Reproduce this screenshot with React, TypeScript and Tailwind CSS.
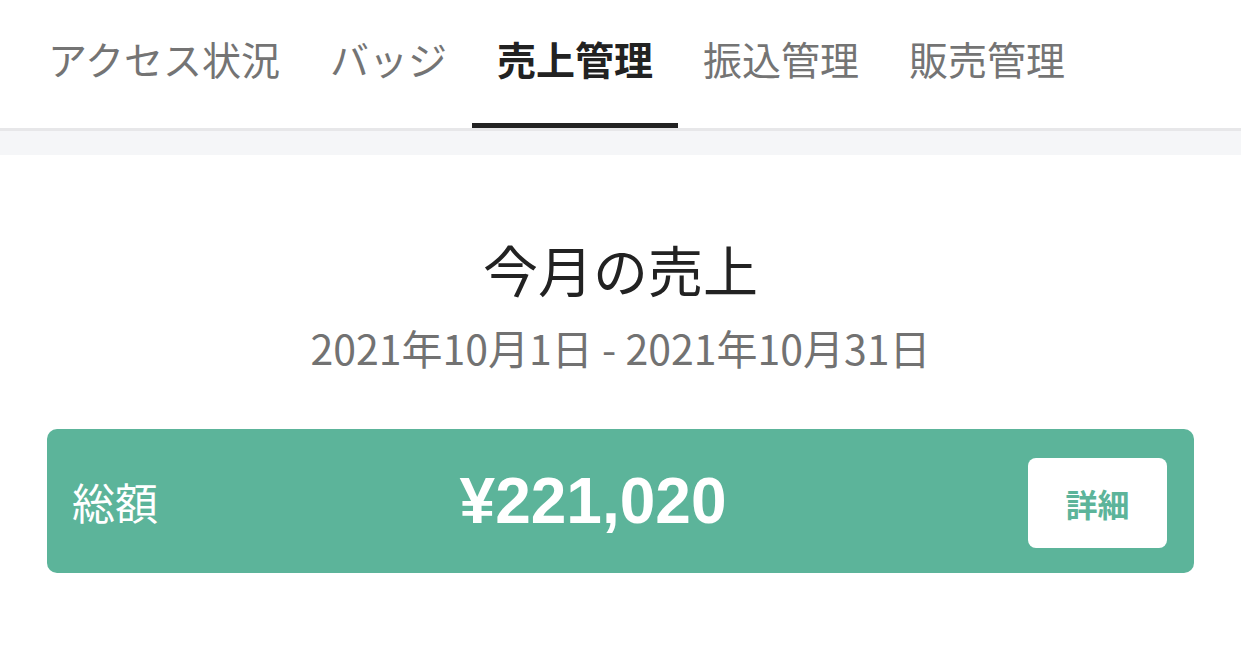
const tabs = ['アクセス状況', 'バッジ', '売上管理', '振込管理', '販売管理'];

const jp = { fontFamily: '"Noto Sans CJK JP", "Noto Sans", sans-serif' };

export default function App() {
  const active = '売上管理';

  return (
    <div className="w-[1241px] h-[671px] bg-white overflow-hidden" style={jp}>
      {/* Tabs */}
      <div className="flex pl-[23px] border-b-[3px] border-[#e7e7e9]">
        {tabs.map((t) => (
          <div
            key={t}
            className={`h-[128px] px-[25px] flex items-center text-[39px] leading-none border-b-[5px] ${
              t === active
                ? 'border-[#222222] text-[#222222] font-bold'
                : 'border-transparent text-[#747474]'
            }`}
          >
            <span className="-mt-[6px]">{t}</span>
          </div>
        ))}
      </div>
      <div className="h-[24px] bg-[#f5f6f8]" />

      {/* This month */}
      <div className="px-[47px]">
        <div className="flex flex-col items-center pt-[86px]">
          <h2 className="text-[55px] leading-none text-[#222222]">今月の売上</h2>
          <p className="mt-[31px] text-[41px] leading-none text-[#727272]">
            2021年10月1日 - 2021年10月31日
          </p>
        </div>

        <div className="mt-[61px] h-[144px] rounded-[10px] bg-[#5cb49a] flex items-center pl-[25px] pr-[27px]">
          <span className="text-[43px] leading-none text-white">総額</span>
          <span
            className="flex-1 text-center text-white font-bold text-[64px] leading-none"
            style={{ fontFamily: '"Liberation Sans", Arial, sans-serif' }}
          >
            ¥221,020
          </span>
          <button className="w-[139px] h-[90px] mt-[3px] rounded-[8px] bg-white text-[#5cb49a] font-bold text-[32px] leading-none">
            詳細
          </button>
        </div>
      </div>
    </div>
  );
}
